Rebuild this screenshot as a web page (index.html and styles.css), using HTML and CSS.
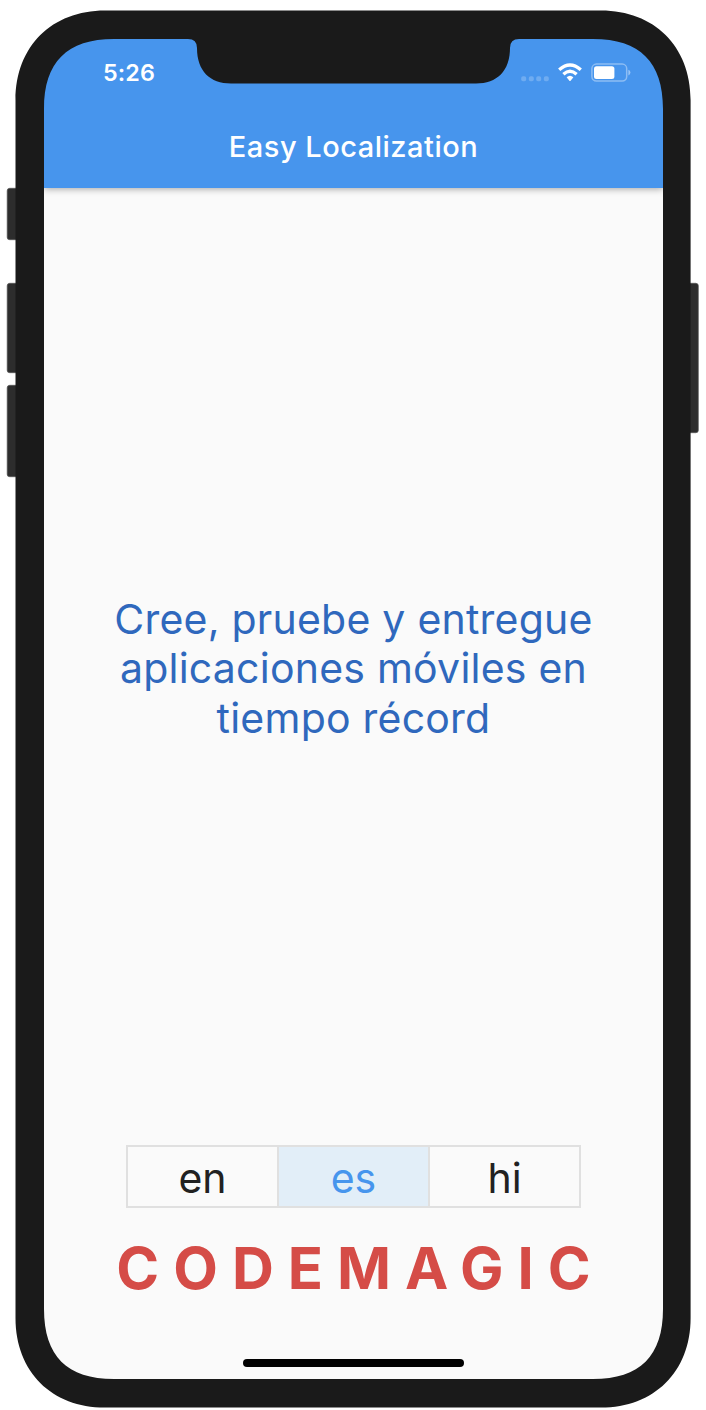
FILE: index.html
```html
<!DOCTYPE html>
<html lang="es">
<head>
<meta charset="utf-8">
<title>Easy Localization</title>
<link rel="stylesheet" href="styles.css">
</head>
<body>
<div class="phone">
  <main class="screen">
    <header class="appbar">
      <div class="status">
        <span class="time">5:26</span>
        <svg class="indicators" width="112" height="22" viewBox="0 0 112 22">
          <g fill="#fff" fill-opacity=".22">
            <rect x="1.2" y="14.2" width="5" height="5" rx="1.8"/>
            <rect x="8.8" y="14.2" width="5" height="5" rx="1.8"/>
            <rect x="16.2" y="14.2" width="5" height="5" rx="1.8"/>
            <rect x="23.8" y="14.2" width="5" height="5" rx="1.8"/>
          </g>
          <g fill="none" stroke="#fff" stroke-width="3.3">
            <path d="M39.2 7.8Q50 -1.8 60.8 7.8"/>
            <path d="M43.4 12.2Q50 6.2 56.6 12.2"/>
          </g>
          <path d="M46.6 15.3Q50 12.3 53.4 15.3L50.6 18.7Q50 19.3 49.4 18.7Z" fill="#fff"/>
          <rect x="71.9" y="2.1" width="34.8" height="17" rx="4.5" fill="none" stroke="#fff" stroke-opacity=".38" stroke-width="1.5"/>
          <path d="M108.4 7.8Q110.4 8.6 110.4 10.6T108.4 13.4Z" fill="#fff" fill-opacity=".45"/>
          <rect x="74" y="4.2" width="20.4" height="12.8" rx="2.5" fill="#fff"/>
        </svg>
      </div>
      <h1 class="title">Easy Localization</h1>
    </header>
    <p class="message"><span class="line">Cree, pruebe y entregue</span> <span class="line">aplicaciones móviles en</span> <span class="line">tiempo récord</span></p>
    <div class="tabs">
      <button class="tab">en</button>
      <button class="tab active">es</button>
      <button class="tab">hi</button>
    </div>
    <div class="brand">CODEMAGIC</div>
    <div class="home"></div>
  </main>
  <svg class="bezel" width="706" height="1410" viewBox="0 0 706 1410">
    <g fill="#2d2d2d" stroke="#555" stroke-width=".7">
      <rect x="7.2" y="188.3" width="14" height="51.4" rx="2.5"/>
      <rect x="7.2" y="283.3" width="14" height="89.4" rx="2.5"/>
      <rect x="7.2" y="385.3" width="14" height="91.4" rx="2.5"/>
      <rect x="684" y="283.3" width="14.3" height="149.4" rx="2.5"/>
    </g>
    <path fill="#1a1a1a" fill-rule="evenodd" d="M105 10.4H601C654 10.4 690.6 46 690.6 100V1318C690.6 1372 654 1407.6 601 1407.6H105C52 1407.6 15.5 1372 15.5 1318V100C15.5 46 52 10.4 105 10.4Z
      M44 109V1309C44 1356 67 1379 114 1379H593C640 1379 663 1356 663 1309V109C663 62 640 39 593 39H519Q510 39 510 48C510 71 497 83.5 476 83.5H231C210 83.5 197 71 197 48Q197 39 188 39H114C67 39 44 62 44 109Z"/>
  </svg>
</div>
</body>
</html>
```
FILE: styles.css
```css
body {
  margin: 0;
  background: #fff;
  font-family: Inter, "Liberation Sans", sans-serif;
}

.phone {
  position: relative;
  box-sizing: border-box;
  width: 706px;
  height: 1410px;
  padding: 39px 43px 31px 44px;
  overflow: hidden;
}

.bezel {
  position: absolute;
  inset: 0;
  pointer-events: none;
}

.screen {
  display: flex;
  flex-direction: column;
  align-items: center;
  height: 1340px;
  background: #fafafa;
  border-radius: 40px;
}

.appbar {
  width: 100%;
  height: 149.4px;
  border-radius: 40px 40px 0 0;
  background: #4795ed;
  box-shadow: 0 1px 7px rgba(0, 0, 0, .35);
  color: #fff;
}

.status {
  display: flex;
  justify-content: space-between;
  align-items: center;
  height: 68px;
  padding: 0 31px 0 59px;
}

.time {
  font-size: 23.3px;
  line-height: 28px;
  font-weight: 600;
  letter-spacing: .1px;
}

.title {
  margin: 20px 0 0;
  font-size: 29px;
  line-height: 40px;
  font-weight: 500;
  letter-spacing: .5px;
  text-align: center;
}

.message {
  margin: auto 0;
  padding-top: 4px;
  font-size: 41px;
  line-height: 49.5px;
  letter-spacing: .23px;
  color: #2f68bd;
  text-align: center;
}

.line {
  display: block;
  white-space: nowrap;
}

.tabs {
  display: flex;
  box-sizing: border-box;
  width: 455px;
  height: 63px;
  border: 2px solid #e0e0e0;
}

.tab {
  flex: 1;
  padding: 3px 0 0;
  border: 0;
  background: none;
  font: 400 41px/59px Inter, sans-serif;
  line-height: 56px;
  color: #212121;
}

.tab + .tab {
  border-left: 2px solid #e0e0e0;
}

.active {
  background: #e2eef8;
  color: #4795ed;
}

.brand {
  margin-top: 24.5px;
  font-size: 58px;
  line-height: 70px;
  font-weight: 700;
  letter-spacing: 14px;
  margin-right: -14px;
  color: #d54c47;
}

.home {
  width: 221px;
  height: 8px;
  margin: 56px 0 12px;
  border-radius: 4px;
  background: #000;
}
```
